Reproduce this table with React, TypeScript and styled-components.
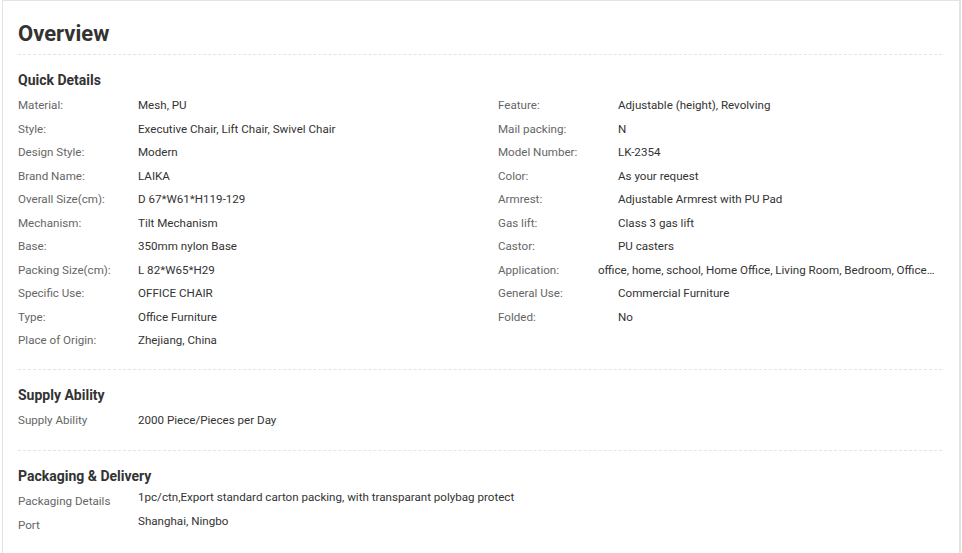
import styled, { createGlobalStyle } from "styled-components";

const GlobalStyle = createGlobalStyle`
  html, body {
    margin: 0;
    padding: 0;
    background: #ffffff;
  }
  body {
    font-family: Roboto, "Liberation Sans", Arial, sans-serif;
    color: #333;
  }
`;

type Row = { label: string; value: string; shift?: boolean };

const leftRows: Row[] = [
  { label: "Material:", value: "Mesh, PU" },
  { label: "Style:", value: "Executive Chair, Lift Chair, Swivel Chair" },
  { label: "Design Style:", value: "Modern" },
  { label: "Brand Name:", value: "LAIKA" },
  { label: "Overall Size(cm):", value: "D 67*W61*H119-129" },
  { label: "Mechanism:", value: "Tilt Mechanism" },
  { label: "Base:", value: "350mm nylon Base" },
  { label: "Packing Size(cm):", value: "L 82*W65*H29" },
  { label: "Specific Use:", value: "OFFICE CHAIR" },
  { label: "Type:", value: "Office Furniture" },
  { label: "Place of Origin:", value: "Zhejiang, China" },
];

const rightRows: Row[] = [
  { label: "Feature:", value: "Adjustable (height), Revolving" },
  { label: "Mail packing:", value: "N" },
  { label: "Model Number:", value: "LK-2354" },
  { label: "Color:", value: "As your request" },
  { label: "Armrest:", value: "Adjustable Armrest with PU Pad" },
  { label: "Gas lift:", value: "Class 3 gas lift" },
  { label: "Castor:", value: "PU casters" },
  {
    label: "Application:",
    value:
      "office, home, school, Home Office, Living Room, Bedroom, Office Building, Hotel",
    shift: true,
  },
  { label: "General Use:", value: "Commercial Furniture" },
  { label: "Folded:", value: "No" },
];

const packaging: Row[] = [
  {
    label: "Packaging Details",
    value: "1pc/ctn,Export standard carton packing, with transparant polybag protect",
  },
  { label: "Port", value: "Shanghai, Ningbo" },
];

const DetailList = ({ rows, raised }: { rows: Row[]; raised?: boolean }) => (
  <List>
    {rows.map((r) => (
      <Item key={r.label}>
        <Label>{r.label}</Label>
        <Value $shift={r.shift} $raised={raised}>
          {r.value}
        </Value>
      </Item>
    ))}
  </List>
);

export default function App() {
  return (
    <>
      <GlobalStyle />
      <Card>
        <Header>
          <Title>Overview</Title>
        </Header>

        <Section>
          <SectionTitle>Quick Details</SectionTitle>
          <Columns>
            <DetailList rows={leftRows} />
            <DetailList rows={rightRows} />
          </Columns>
        </Section>

        <Section $pad={18}>
          <SectionTitle>Supply Ability</SectionTitle>
          <DetailList
            rows={[{ label: "Supply Ability", value: "2000 Piece/Pieces per Day" }]}
          />
        </Section>

        <Section $last>
          <SectionTitle>Packaging &amp; Delivery</SectionTitle>
          <DetailList rows={packaging} raised />
        </Section>
      </Card>
    </>
  );
}

const Card = styled.div`
  box-sizing: border-box;
  width: 959px;
  height: 553px;
  margin-left: 2px;
  padding: 0 17px 0 15px;
  border: 1px solid #e3e3e3;
  border-right-width: 2px;
  border-bottom: none;
  background: #fff;
  overflow: hidden;
`;

const Header = styled.div`
  padding-top: 20px;
  padding-bottom: 7px;
  border-bottom: 1px dashed #e4e4e4;
`;

const Title = styled.h2`
  margin: 0;
  font-size: 22px;
  line-height: 26px;
  font-weight: 700;
  color: #333;
`;

const Section = styled.div<{ $last?: boolean; $pad?: number }>`
  padding-bottom: ${(p) => p.$pad ?? 16}px;
  border-bottom: ${(p) => (p.$last ? "none" : "1px dashed #e4e4e4")};
`;

const SectionTitle = styled.h3`
  margin: 15px 0 4px;
  font-size: 14px;
  line-height: 20px;
  font-weight: 700;
  color: #333;
`;

const Columns = styled.div`
  display: grid;
  grid-template-columns: 480px 1fr;
`;

const List = styled.div`
  display: flex;
  flex-direction: column;
  min-width: 0;
`;

const Item = styled.div`
  display: flex;
  height: 23.5px;
  font-size: 11.6px;
  min-width: 0;
`;

const Label = styled.span`
  flex: 0 0 120px;
  line-height: 23.5px;
  color: #666;
  white-space: nowrap;
`;

const Value = styled.span<{ $shift?: boolean; $raised?: boolean }>`
  flex: 1;
  min-width: 0;
  margin-left: ${(p) => (p.$shift ? "-20px" : "0")};
  padding-right: ${(p) => (p.$shift ? "6px" : "0")};
  line-height: ${(p) => (p.$raised ? "15.5px" : "23.5px")};
  color: #333;
  white-space: nowrap;
  overflow: hidden;
  text-overflow: ellipsis;
`;
